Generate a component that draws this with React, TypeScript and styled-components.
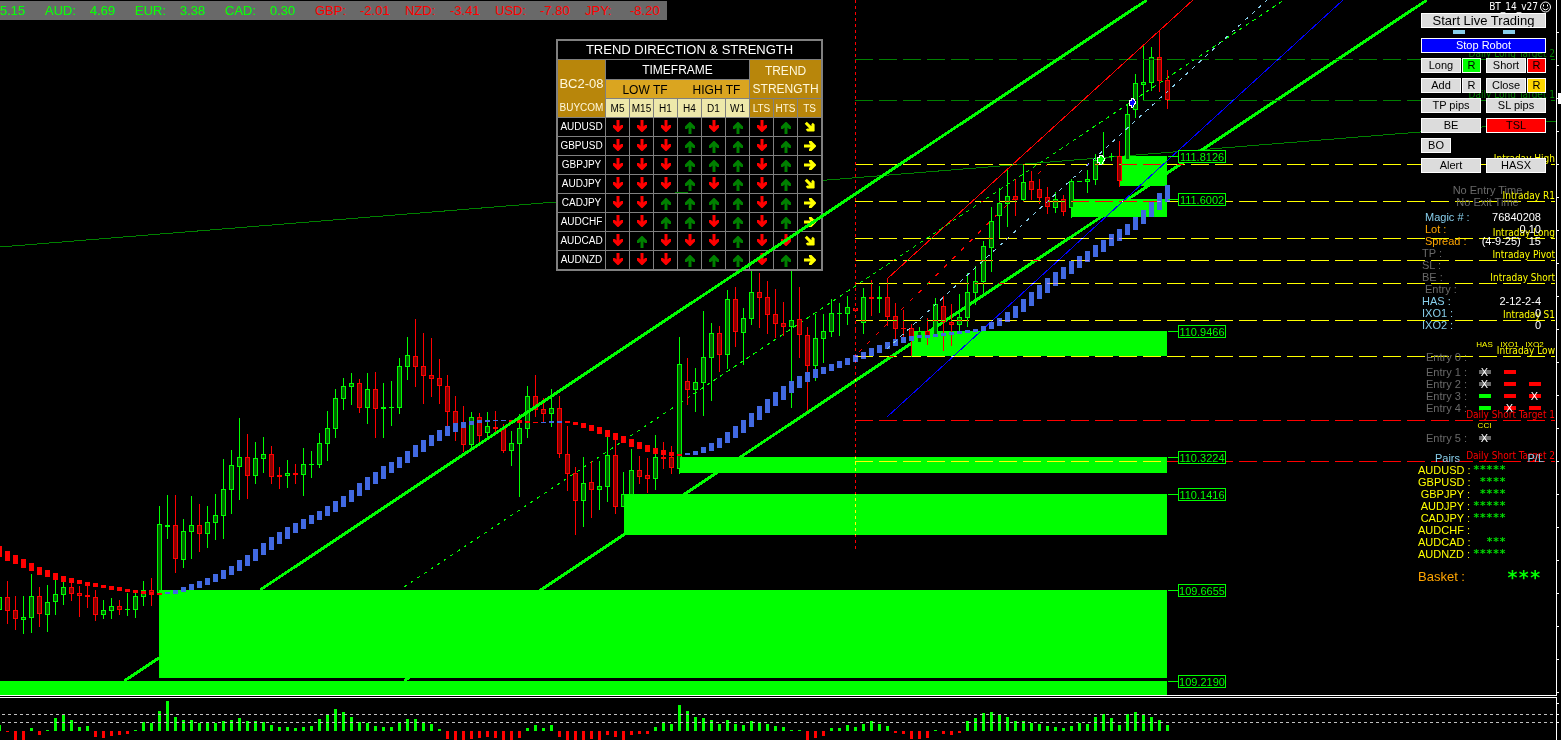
import React from 'react';
import styled, { createGlobalStyle } from 'styled-components';

const LIME = '#00ff00';
const RED = '#ff0000';
const GREY = '#696969';
const SKY = '#87ceeb';
const ORANGE = '#ffa500';
const YELLOW = '#ffff00';
const SANS = '"Liberation Sans", Arial, sans-serif';
const TAHOMA = '"DejaVu Sans Condensed", "DejaVu Sans", Tahoma, sans-serif';

const VIEW_W = 1561;
const MAIN_H = 695;
const SUB_H = 42;
const STEP = 8;

const barX = (i: number) => i * STEP - 1;

/* high, body top, body bottom, low, direction (1 = up, 0 = down) */
type Candle = [number, number, number, number, 0 | 1];
const candles: Candle[] = [
  [597, 597, 610, 610, 1], [581, 597, 611, 624, 0], [596, 610, 619, 630, 0], [596, 617, 620, 634, 1],
  [574, 596, 618, 633, 1], [587, 596, 614, 627, 0], [585, 602, 615, 632, 1], [578, 594, 602, 615, 1],
  [580, 587, 595, 605, 1], [580, 587, 594, 601, 0], [586, 593, 596, 617, 0], [584, 595, 597, 608, 0],
  [590, 597, 615, 621, 0], [600, 610, 615, 619, 1], [598, 606, 611, 619, 1], [600, 606, 610, 615, 0],
  [593, 609, 610, 616, 1], [592, 596, 610, 618, 1], [581, 590, 597, 606, 1], [578, 590, 595, 606, 0],
  [506, 524, 593, 593, 1], [495, 525, 527, 539, 1], [495, 525, 559, 573, 0], [519, 531, 560, 568, 1],
  [496, 525, 532, 559, 1], [504, 525, 534, 552, 0], [506, 522, 534, 548, 1], [494, 515, 523, 540, 1],
  [459, 489, 516, 539, 1], [450, 465, 490, 514, 1], [418, 457, 467, 500, 1], [434, 457, 476, 499, 0],
  [442, 458, 476, 484, 1], [437, 454, 459, 473, 1], [446, 454, 477, 484, 0], [467, 475, 477, 489, 0],
  [460, 473, 476, 488, 1], [464, 473, 475, 484, 0], [448, 464, 475, 496, 1], [451, 464, 465, 478, 1],
  [433, 443, 465, 468, 1], [411, 428, 444, 461, 1], [389, 398, 429, 438, 1], [378, 386, 399, 410, 1],
  [373, 383, 387, 405, 1], [379, 383, 408, 413, 0], [373, 389, 408, 424, 1], [372, 389, 409, 438, 0],
  [383, 407, 409, 438, 1], [381, 407, 408, 426, 1], [358, 366, 408, 414, 1], [337, 355, 367, 380, 1],
  [319, 356, 367, 387, 0], [333, 366, 376, 404, 0], [338, 375, 379, 397, 0], [359, 378, 386, 404, 0],
  [375, 386, 412, 427, 0], [396, 411, 432, 441, 0], [406, 423, 445, 452, 0], [412, 417, 445, 451, 1],
  [413, 417, 436, 444, 0], [412, 426, 433, 440, 1], [411, 427, 429, 432, 0], [424, 428, 451, 453, 0],
  [431, 443, 451, 466, 1], [414, 428, 444, 497, 1], [386, 396, 429, 438, 1], [375, 396, 410, 417, 0],
  [398, 409, 414, 423, 0], [389, 408, 414, 427, 1], [396, 408, 454, 458, 0], [426, 454, 474, 491, 0],
  [467, 473, 501, 535, 0], [457, 483, 501, 527, 1], [461, 482, 490, 518, 0], [461, 486, 490, 510, 1],
  [437, 455, 487, 502, 1], [437, 455, 507, 514, 0], [472, 494, 507, 507, 1], [449, 470, 496, 496, 1],
  [456, 470, 477, 484, 0], [458, 475, 479, 493, 0], [435, 457, 479, 490, 1], [442, 457, 459, 469, 0],
  [446, 457, 468, 474, 0], [337, 364, 469, 474, 1], [358, 381, 390, 405, 0], [368, 382, 390, 412, 1],
  [311, 357, 383, 416, 1], [323, 333, 358, 401, 1], [326, 333, 355, 372, 0], [290, 299, 355, 369, 1],
  [287, 299, 332, 347, 0], [308, 318, 333, 365, 1], [268, 292, 319, 325, 1], [273, 292, 298, 328, 0],
  [281, 297, 315, 334, 0], [289, 314, 324, 338, 0], [302, 323, 327, 336, 0], [268, 320, 327, 408, 1],
  [287, 319, 335, 358, 0], [327, 335, 366, 411, 0], [314, 338, 366, 381, 1], [314, 331, 339, 363, 1],
  [299, 313, 332, 337, 1], [303, 313, 314, 336, 1], [296, 307, 314, 325, 1], [295, 308, 311, 330, 0],
  [288, 297, 323, 334, 1], [280, 297, 299, 316, 0], [286, 297, 299, 313, 1], [279, 297, 317, 326, 0],
  [303, 316, 329, 341, 0], [310, 328, 329, 341, 0], [324, 328, 340, 357, 0], [327, 331, 343, 343, 1],
  [318, 331, 336, 345, 0], [298, 304, 335, 335, 1], [296, 306, 322, 351, 0], [304, 322, 325, 346, 0],
  [294, 317, 325, 331, 1], [273, 292, 318, 327, 1], [266, 281, 293, 305, 1], [241, 246, 282, 295, 1],
  [207, 221, 248, 272, 1], [188, 203, 216, 238, 1], [170, 196, 204, 227, 1], [179, 196, 200, 216, 0],
  [165, 182, 200, 202, 1], [171, 181, 190, 200, 0], [179, 189, 198, 204, 0], [187, 197, 207, 214, 0],
  [192, 199, 208, 213, 1], [195, 199, 212, 216, 0], [179, 181, 208, 218, 1], [181, 181, 182, 182, 1],
  [170, 179, 182, 193, 1], [154, 160, 180, 185, 1], [132, 158, 159, 164, 1], [153, 156, 157, 161, 1],
  [141, 156, 181, 187, 0], [104, 114, 160, 160, 1], [74, 83, 110, 118, 1], [46, 82, 85, 100, 1],
  [47, 57, 83, 91, 1], [30, 57, 81, 92, 0], [70, 80, 100, 109, 0],
];

/* smoothed average: top and bottom of each block */
const average: [number, number][] = [
  [546, 557], [551, 561], [555, 564], [559, 568], [563, 571], [567, 575], [570, 577], [573, 580], [576, 582],
  [578, 583], [580, 584], [582, 586], [583, 587], [585, 588], [586, 590], [587, 591], [589, 592], [590, 593],
  [591, 594], [592, 595], [593, 595], [592, 594], [590, 594], [587, 592], [584, 590], [581, 588], [578, 585],
  [574, 582], [570, 579], [566, 575], [560, 571], [555, 566], [549, 561], [543, 555], [537, 550], [532, 544],
  [527, 539], [523, 533], [519, 529], [515, 524], [511, 520], [506, 516], [501, 512], [496, 507], [490, 502],
  [483, 496], [477, 490], [472, 484], [466, 479], [462, 473], [457, 468], [451, 463], [445, 457], [440, 452],
  [435, 446], [430, 441], [426, 436], [423, 432], [422, 428], [421, 425], [420, 423], [420, 422], [420, 421],
  [420, 421], [420, 422], [420, 423], [421, 423], [422, 423], [422, 423], [421, 423], [421, 423], [421, 423],
  [422, 425], [423, 428], [425, 431], [427, 434], [430, 437], [433, 440], [436, 443], [439, 447], [442, 449],
  [445, 452], [448, 454], [450, 455], [452, 456], [454, 456], [453, 455], [451, 455], [447, 453], [443, 451],
  [438, 448], [432, 443], [426, 438], [420, 433], [413, 427], [406, 420], [399, 413], [392, 406], [386, 400],
  [381, 393], [376, 388], [372, 382], [369, 378], [367, 374], [364, 371], [361, 368], [358, 365], [355, 362],
  [352, 359], [348, 356], [345, 353], [342, 349], [339, 346], [337, 343], [336, 341], [335, 338], [335, 338],
  [334, 337], [333, 336], [332, 335], [331, 334], [330, 333], [329, 332], [326, 331], [322, 329], [318, 326],
  [312, 322], [306, 318], [299, 312], [292, 306], [285, 299], [278, 293], [272, 286], [267, 279], [261, 274],
  [256, 268], [251, 262], [245, 257], [240, 252], [234, 246], [229, 241], [224, 235], [217, 230], [210, 224],
  [202, 217], [193, 210], [185, 202],
];
const isFalling = (i: number) => i <= 20 || (i >= 64 && i <= 67) || (i >= 71 && i <= 85);

const histogram = [
  6, -1, -9, -9, 3, -4, 1, 13, 17, 11, 4, 5, -6, -7, -5, -4, -3, 1, 9, 8, 20, 30, 14, 11, 11, 8, 8, 8, 10, 11, 13,
  10, 10, 9, 6, 4, 4, 3, 4, 5, 12, 16, 22, 19, 14, 9, 8, 5, 4, 4, 9, 12, 12, 9, 7, 2, -8, -9, -9, -8, -7, -6, -7,
  -9, -9, -7, 3, 6, 3, 6, -6, -9, -9, -9, -8, -9, -4, -6, -9, -4, -3, -3, 4, 8, 7, 26, 20, 14, 13, 11, 7, 11, 7, 6,
  10, 8, 7, 5, 4, 1, 1, -9, -7, -5, 3, 3, 6, 4, 7, 10, 7, 5, -2, -3, -8, -8, -7, 1, -3, -4, -2, 10, 13, 18, 19, 17,
  14, 10, 10, 8, 7, 5, 4, 3, 5, 8, 7, 14, 17, 13, 6, 17, 19, 16, 14, 11, 6,
];

type Zone = { x: number; y: number; h: number };
const lowerZones: Zone[] = [
  { x: 0, y: 681, h: 14 },
  { x: 159, y: 590, h: 88 },
  { x: 624, y: 494, h: 41 },
  { x: 680, y: 457, h: 16 },
];
const upperZones: Zone[] = [
  { x: 912, y: 331, h: 25 },
  { x: 1071, y: 199, h: 18 },
  { x: 1120, y: 156, h: 30 },
];
const ZONE_END = 1167;

const prices: [string, number][] = [
  ['111.8126', 156], ['111.6002', 199], ['110.9466', 331], ['110.3224', 457],
  ['110.1416', 494], ['109.6655', 590], ['109.2190', 681],
];

const levels: [string, number, string][] = [
  ['Daily Long Target 2', 59, '#008000'],
  ['Daily Long Target 1', 100, '#008000'],
  ['Intraday High', 164, YELLOW],
  ['Intraday R1', 201, YELLOW],
  ['Intraday Long', 238, YELLOW],
  ['Intraday Pivot', 260, YELLOW],
  ['Intraday Short', 283, YELLOW],
  ['Intraday S1', 320, YELLOW],
  ['Intraday Low', 356, YELLOW],
  ['Daily Short Target 1', 420, RED],
  ['Daily Short Target 2', 461, RED],
];

const Global = createGlobalStyle`
  html, body { margin: 0; background: #000; }
  body { font-family: ${SANS}; font-size: 11px; color: #fff; }
`;

const Page = styled.main`
  position: relative;
  display: flex;
  flex-direction: column;
  min-height: 100vh;
  overflow: hidden;
  background: #000;
`;

const Plot = styled.svg`
  display: block;
  width: 100%;
  height: auto;
  shape-rendering: crispEdges;
`;

const Overlay = styled(Plot)`
  position: absolute;
  top: 0;
  left: 0;
  pointer-events: none;
`;

const LevelLines = styled.g`
  mix-blend-mode: difference;
`;

const Divider = styled.div`
  height: 1px;
  margin-right: 4px;
  border-top: 1px solid #fff;
  border-bottom: 1px solid #fff;
`;

const Zones = ({ zones }: { zones: Zone[] }) => (
  <g fill={LIME}>
    {zones.map((z) => (
      <rect key={z.y} x={z.x} y={z.y} width={ZONE_END - z.x} height={z.h} />
    ))}
  </g>
);

const CandleShape = ({ index, data }: { index: number; data: Candle }) => {
  const [high, top, bottom, low, up] = data;
  const x = barX(index);
  const edge = up ? LIME : RED;
  return (
    <g>
      <rect x={x} y={high} width={1} height={low - high} fill={edge} />
      <rect x={x - 2} y={top} width={5} height={bottom - top} fill={edge} />
      {bottom - top > 2 && (
        <rect x={x - 1} y={top + 1} width={3} height={bottom - top - 2} fill={up ? '#006400' : '#8b0000'} />
      )}
    </g>
  );
};

const axisTicks = Array.from({ length: 21 }, (_, k) => 32 + 33 * k);

const PriceChart = () => (
  <Plot viewBox={`0 0 ${VIEW_W} ${MAIN_H}`} role="img" aria-label="Price chart">
    <line x1={0} y1={247} x2={1556} y2={121} stroke="#008000" />
    <Zones zones={upperZones} />
    <line x1={404} y1={681} x2={1427} y2={0} stroke={LIME} strokeWidth={3} />
    <line x1={887} y1={279} x2={1193} y2={0} stroke={RED} />
    <line x1={887} y1={417} x2={1343} y2={0} stroke="#0000ff" />
    <line x1={859} y1={352} x2={1047} y2={165} stroke={RED} strokeDasharray="4 8" />
    <line x1={404} y1={587} x2={680} y2={403} stroke={LIME} strokeDasharray="3 5" />
    <line x1={680} y1={403} x2={1284} y2={0} stroke={LIME} strokeDasharray="4 4" />
    {candles.map((c, i) => (
      <CandleShape key={i} index={i} data={c} />
    ))}
    <Zones zones={lowerZones} />
    {average.map(([top, bottom], i) => (
      <rect
        key={i}
        x={barX(i) - 2}
        y={top}
        width={5}
        height={bottom - top}
        fill={isFalling(i) ? RED : '#4169e1'}
      />
    ))}
    <line x1={887} y1={349} x2={1267} y2={0} stroke={SKY} strokeDasharray="4 5" />
    <LevelLines>
      {levels.map(([name, y, color]) => (
        <g key={name}>
          {Array.from({ length: 30 }, (_, k) => 855 + 24 * k).map((x) => (
            <rect key={x} x={x} y={y} width={Math.min(18, 1555 - x)} height={1} fill={color} />
          ))}
        </g>
      ))}
      {Array.from({ length: 92 }, (_, k) => 6 * k).map((y) => (
        <rect key={y} x={855} y={y} width={1} height={3} fill={RED} />
      ))}
    </LevelLines>
    {levels.map(([name, y, color]) => (
      <text key={name} x={1555} y={y - 2} fill={color} fontFamily={TAHOMA} fontSize={10} textAnchor="end">
        {name}
      </text>
    ))}
    {prices.map(([price, y]) => (
      <g key={price}>
        <rect x={1168} y={y} width={10} height={1} fill={LIME} />
        <rect x={1178} y={y - 6} width={48} height={13} fill={LIME} />
        <rect x={1179} y={y - 5} width={46} height={11} fill="#000" />
        <text x={1202} y={y + 5} fill={LIME} fontFamily={SANS} fontSize={11} textAnchor="middle">
          {price}
        </text>
      </g>
    ))}
    <path d="M1097 157h2v-2h3l3 4l-3 5h-3v-2h-2z" fill={LIME} stroke="#fff" />
    <path d="M1129 100h2v-2h2l3 4l-3 5h-2v-2h-2z" fill="#0000ff" stroke="#fff" />
    <rect x={1556} y={0} width={1} height={MAIN_H} fill="#fff" />
    {axisTicks.map((y) => (
      <rect key={y} x={1557} y={y} width={2} height={1} fill="#fff" />
    ))}
    <rect x={1558} y={93} width={3} height={11} fill="#fff" />
  </Plot>
);

const BASELINE = 33;
const Histogram = () => (
  <Plot viewBox={`0 0 ${VIEW_W} ${SUB_H}`} role="img" aria-label="Momentum histogram">
    {histogram.map((v, i) => (
      <rect
        key={i}
        x={barX(i) - 1}
        y={v > 0 ? BASELINE - v : BASELINE}
        width={3}
        height={Math.abs(v)}
        fill={v > 0 ? LIME : RED}
      />
    ))}
    {[16, 24].map((y) => (
      <g key={y} fill="#c0c0c0">
        {Array.from({ length: 259 }, (_, k) => 2 + 6 * k).map((x) => (
          <rect key={x} x={x} y={y} width={3} height={1} />
        ))}
      </g>
    ))}
    <rect x={1556} y={0} width={1} height={SUB_H} fill="#fff" />
    {[5, 16, 24].map((y) => (
      <rect key={y} x={1557} y={y} width={2} height={1} fill="#fff" />
    ))}
  </Plot>
);

/* ---------- currency ticker ---------- */

const Ticker = styled.ul`
  position: absolute;
  top: 1px;
  left: 0;
  display: flex;
  margin: 0;
  padding: 0 7px 0 0;
  list-style: none;
  background: ${GREY};
  font-size: 13px;
  line-height: 19px;
`;

const Quote = styled.li<{ $down?: boolean; $labelled?: boolean }>`
  display: grid;
  grid-template-columns: ${(p) => (p.$labelled ? '45px 45px' : '45px')};
  color: ${(p) => (p.$down ? RED : LIME)};

  &:last-child {
    grid-template-columns: 45px auto;
  }
`;

const quotes: [string, string][] = [
  ['AUD:', '4.69'], ['EUR:', '3.38'], ['CAD:', '0.30'], ['GBP:', '-2.01'],
  ['NZD:', '-3.41'], ['USD:', '-7.80'], ['JPY:', '-8.20'],
];

/* ---------- trend table ---------- */

const TrendTable = styled.table`
  position: absolute;
  top: 39px;
  left: 556px;
  width: 267px;
  box-sizing: border-box;
  table-layout: fixed;
  border-collapse: separate;
  border-spacing: 0;
  border: 2px solid #808080;
  background: #000;
  color: #fff;
`;

type CellProps = { $bg?: string; $fg?: string; $size?: number; $noRight?: boolean; $noBottom?: boolean; $h?: number };
const HeadCell = styled.th<CellProps>`
  box-sizing: border-box;
  height: ${(p) => p.$h ?? 19}px;
  padding: 0;
  overflow: hidden;
  border-right: ${(p) => (p.$noRight ? 0 : 1)}px solid #808080;
  border-bottom: ${(p) => (p.$noBottom ? 0 : 1)}px solid #808080;
  background: ${(p) => p.$bg ?? '#000'};
  color: ${(p) => p.$fg ?? '#fff'};
  font-size: ${(p) => p.$size ?? 10}px;
  font-weight: 400;
  line-height: 18px;
  text-align: center;
  white-space: nowrap;
`;

const NameCell = styled(HeadCell)`
  line-height: 16px;
`;

const FrameCell = styled(HeadCell)`
  padding-top: 2px;
  line-height: 16px;
`;

const GroupCell = styled(HeadCell)`
  padding: 2px 0 0 6px;
  line-height: 16px;
`;

const CornerCell = styled(HeadCell)`
  vertical-align: bottom;
`;

const CornerName = styled.div`
  padding-bottom: 6px;
  font-size: 13px;
`;

const StrengthCell = styled(HeadCell)`
  padding-top: 2px;
  line-height: 18px;
`;

const ArrowCell = styled.td<{ $noRight?: boolean; $noBottom?: boolean; $drop: number }>`
  box-sizing: border-box;
  height: ${(p) => (p.$noBottom ? 18 : 19)}px;
  padding: ${(p) => p.$drop}px 0 0;
  border-right: ${(p) => (p.$noRight ? 0 : 1)}px solid #808080;
  border-bottom: ${(p) => (p.$noBottom ? 0 : 1)}px solid #808080;
  vertical-align: top;
  line-height: 0;
  text-align: center;
`;

/* colour, rotation, spoken name, distance from the cell's top */
const arrows: Record<string, [string, number, string, number]> = {
  D: [RED, 0, 'Down', 2],
  U: ['#008000', 180, 'Up', 4],
  R: [YELLOW, -90, 'Flat', 3],
  S: [YELLOW, -45, 'Weakening', 3],
};

const Arrow = ({ kind }: { kind: string }) => {
  const [color, turn, name] = arrows[kind];
  return (
    <svg width={12} height={12} viewBox="-6 -6 12 12" role="img" aria-label={name}>
      <path
        d="M-1.5 -6H1.5V0.5L3 -1H5V1.5L0.5 6H-0.5L-5 1.5V-1H-3L-1.5 0.5Z"
        fill={color}
        transform={`rotate(${turn})`}
      />
    </svg>
  );
};

const trendRows: [string, string][] = [
  ['AUDUSD', 'DDDUDUDUS'],
  ['GBPUSD', 'DDDUUUDUR'],
  ['GBPJPY', 'DDDUUUDUR'],
  ['AUDJPY', 'DDDUDUDUS'],
  ['CADJPY', 'DDUUUUDUR'],
  ['AUDCHF', 'DDUUDUDUR'],
  ['AUDCAD', 'DUDDDUDDS'],
  ['AUDNZD', 'DDDUUUDUR'],
];

const DARK_GOLD = '#b8860b';
const GOLD = '#daa520';
const PALE = '#eee8aa';
const CREAM = '#fff8dc';

const Trend = () => (
  <TrendTable>
    <colgroup>
      <col style={{ width: 48 }} />
      {Array.from({ length: 8 }, (_, k) => (
        <col key={k} style={{ width: 24 }} />
      ))}
      <col style={{ width: 23 }} />
    </colgroup>
    <thead>
      <tr>
        <HeadCell colSpan={10} $size={13} $noRight>TREND DIRECTION &amp; STRENGTH</HeadCell>
      </tr>
      <tr>
        <CornerCell rowSpan={3} $bg={DARK_GOLD} $fg={CREAM}>
          <CornerName>BC2-08</CornerName>
          BUYCOM
        </CornerCell>
        <HeadCell colSpan={6} $size={12} $h={20}>TIMEFRAME</HeadCell>
        <StrengthCell colSpan={3} rowSpan={2} $size={12} $bg={DARK_GOLD} $fg={CREAM} $noRight>
          TREND<br />STRENGTH
        </StrengthCell>
      </tr>
      <tr>
        <GroupCell colSpan={3} $size={12} $bg={GOLD} $fg="#000" $noRight>LOW TF</GroupCell>
        <GroupCell colSpan={3} $size={12} $bg={GOLD} $fg="#000">HIGH TF</GroupCell>
      </tr>
      <tr>
        {['M5', 'M15', 'H1', 'H4', 'D1', 'W1'].map((t) => (
          <FrameCell key={t} $bg={PALE} $fg="#000">{t}</FrameCell>
        ))}
        {['LTS', 'HTS', 'TS'].map((t) => (
          <FrameCell key={t} $bg={DARK_GOLD} $fg={CREAM} $noRight={t === 'TS'}>{t}</FrameCell>
        ))}
      </tr>
    </thead>
    <tbody>
      {trendRows.map(([pair, dirs], r) => {
        const last = r === trendRows.length - 1;
        return (
          <tr key={pair}>
            <NameCell scope="row" $noBottom={last} $h={last ? 18 : 19}>{pair}</NameCell>
            {dirs.split('').map((d, i) => (
              <ArrowCell key={i} $drop={arrows[d][3]} $noRight={i === 8} $noBottom={last}>
                <Arrow kind={d} />
              </ArrowCell>
            ))}
          </tr>
        );
      })}
    </tbody>
  </TrendTable>
);

/* ---------- robot control panel ---------- */

const Panel = styled.aside`
  position: absolute;
  top: 0;
  right: 15px;
  width: 125px;
  line-height: 12px;
`;

const PanelHead = styled.header`
  display: flex;
  align-items: center;
  justify-content: flex-end;
  height: 13px;
  margin-right: -6px;
  gap: 1px;
  font-family: ${TAHOMA};
  font-size: 10px;
`;

const PanelButton = styled.button<{ $bg?: string; $fg?: string; $w?: number; $size?: number }>`
  box-sizing: border-box;
  width: ${(p) => (p.$w ? `${p.$w}px` : '100%')};
  height: 15px;
  padding: 0;
  overflow: hidden;
  border: 1px solid #fff;
  background: ${(p) => p.$bg ?? '#dcdcdc'};
  color: ${(p) => p.$fg ?? '#000'};
  font-family: ${SANS};
  font-size: ${(p) => p.$size ?? 11}px;
  line-height: 13px;
  white-space: nowrap;
`;

const Lamps = styled.div`
  display: flex;
  justify-content: center;
  gap: 38px;
  height: 10px;
  padding-top: 2px;
  box-sizing: border-box;
`;

const Block = styled.span<{ $color: string }>`
  width: 12px;
  height: 4px;
  background: ${(p) => p.$color};
`;

const ButtonRow = styled.div`
  display: flex;
  gap: 5px;
  margin-top: 5px;
`;

const Pair = styled.div`
  display: flex;
  gap: 1px;
`;

const Notice = styled.p`
  margin: 11px 0 3px;
  padding-left: 8px;
  color: ${GREY};
  text-align: center;
`;

const Info = styled.dl`
  margin: 0;
  padding-right: 5px;
`;

const InfoRow = styled.div<{ $color: string; $indent?: boolean }>`
  display: flex;
  justify-content: space-between;
  height: 12px;
  padding-left: ${(p) => (p.$indent ? 4 : 1)}px;
  color: ${(p) => p.$color};
`;

const Value = styled.dd`
  display: flex;
  gap: 8px;
  margin: 0;
  color: #fff;
`;

const infoRows: [string, string[], string, boolean][] = [
  ['Magic # :', ['76840208'], SKY, true],
  ['Lot :', ['0.10'], ORANGE, true],
  ['Spread :', ['(4-9-25)', '15'], ORANGE, true],
  ['TP :', [], GREY, false],
  ['SL :', [], GREY, false],
  ['BE :', [], GREY, false],
  ['Entry :', [], GREY, true],
  ['HAS :', ['2-12-2-4'], SKY, false],
  ['IXO1 :', ['0'], SKY, false],
  ['IXO2 :', ['0'], SKY, false],
];

const PanelTable = styled.table`
  width: 126px;
  table-layout: fixed;
  border-collapse: collapse;
`;

const PairTable = styled(PanelTable)`
  width: 128px;
  margin-left: -3px;
`;

const SignalHead = styled.th<{ $gap?: number }>`
  height: 12px;
  padding: ${(p) => p.$gap ?? 0}px 0 0;
  color: ${YELLOW};
  font-size: 8px;
  font-weight: 400;
  text-align: center;
`;

const EntryLabel = styled.th<{ $gap?: number }>`
  height: 12px;
  padding: ${(p) => p.$gap ?? 0}px 0 0 5px;
  color: ${GREY};
  font-weight: 400;
  text-align: left;
  white-space: nowrap;
`;

const SignalCell = styled.td<{ $gap?: number }>`
  height: 12px;
  padding: ${(p) => p.$gap ?? 0}px 0 0;
`;

const Signal = styled.div`
  display: grid;
  place-items: center;
  height: 12px;

  > * {
    grid-area: 1 / 1;
  }
`;

const Cross = styled.span`
  line-height: 12px;
`;

/* g = grey, r = red, l = lime; upper case adds the cross */
const signalColors: Record<string, string> = { g: GREY, r: RED, l: LIME };
const entries: [string, string, number][] = [
  ['Entry 0 :', '   ', 0],
  ['Entry 1 :', 'Gr ', 3],
  ['Entry 2 :', 'Grr', 0],
  ['Entry 3 :', 'lrR', 0],
  ['Entry 4 :', 'lRr', 0],
];

const EntryRow = ({ label, signals, gap }: { label: string; signals: string; gap: number }) => (
  <tr>
    <EntryLabel scope="row" $gap={gap}>{label}</EntryLabel>
    {signals.split('').map((s, i) => (
      <SignalCell key={i} $gap={gap}>
        {s !== ' ' && (
          <Signal>
            <Block $color={signalColors[s.toLowerCase()]} />
            {s !== s.toLowerCase() && <Cross>X</Cross>}
          </Signal>
        )}
      </SignalCell>
    ))}
  </tr>
);

const PairHead = styled.th<{ $right?: boolean }>`
  height: 12px;
  padding: 8px ${(p) => (p.$right ? 2 : 10)}px 0 0;
  color: ${SKY};
  font-weight: 400;
  text-align: right;
`;

const PairName = styled.th`
  height: 12px;
  padding: 0;
  color: ${YELLOW};
  font-weight: 400;
  text-align: right;
  white-space: nowrap;
`;

const Stars = styled.td`
  height: 12px;
  padding: 0 40px 0 0;
  color: #00dc00;
  font-family: "DejaVu Sans Mono", monospace;
  font-size: 11px;
  font-weight: 700;
  line-height: 12px;
  text-align: right;
`;

const pairs: [string, number][] = [
  ['AUDUSD', 5], ['GBPUSD', 4], ['GBPJPY', 4], ['AUDJPY', 5],
  ['CADJPY', 5], ['AUDCHF', 0], ['AUDCAD', 3], ['AUDNZD', 5],
];

const Basket = styled.div`
  display: flex;
  align-items: center;
  justify-content: space-between;
  height: 16px;
  margin: 9px 5px 0 -3px;
  color: ${ORANGE};
  font-size: 13px;
`;

const BasketStars = styled.span`
  color: ${LIME};
  font-family: "DejaVu Sans Mono", monospace;
  font-size: 19px;
  font-weight: 700;
`;

const Robot = () => (
  <Panel>
    <PanelHead>
      BT_14_v27
      <svg width={13} height={13} viewBox="0 0 13 13" fill="none" stroke="#fff" aria-hidden="true">
        <circle cx={6.5} cy={7} r={5} />
        <path d="M3.5 8Q6.5 11.5 9.5 8" />
        <path d="M4.5 4.5v2M8.5 4.5v2" />
      </svg>
    </PanelHead>
    <PanelButton $size={13}>Start Live Trading</PanelButton>
    <Lamps>
      <Block $color={SKY} />
      <Block $color={SKY} />
    </Lamps>
    <PanelButton $bg="#0000ff" $fg="#fff">Stop Robot</PanelButton>
    <ButtonRow>
      <Pair>
        <PanelButton $w={40}>Long</PanelButton>
        <PanelButton $w={19} $bg={LIME} aria-label="Reset long">R</PanelButton>
      </Pair>
      <Pair>
        <PanelButton $w={40}>Short</PanelButton>
        <PanelButton $w={19} $bg={RED} aria-label="Reset short">R</PanelButton>
      </Pair>
    </ButtonRow>
    <ButtonRow>
      <Pair>
        <PanelButton $w={40}>Add</PanelButton>
        <PanelButton $w={19} aria-label="Reset add">R</PanelButton>
      </Pair>
      <Pair>
        <PanelButton $w={40}>Close</PanelButton>
        <PanelButton $w={19} $bg="#ffd700" aria-label="Reset close">R</PanelButton>
      </Pair>
    </ButtonRow>
    <ButtonRow>
      <PanelButton>TP pips</PanelButton>
      <PanelButton>SL pips</PanelButton>
    </ButtonRow>
    <ButtonRow>
      <PanelButton>BE</PanelButton>
      <PanelButton $bg={RED}>TSL</PanelButton>
    </ButtonRow>
    <ButtonRow>
      <PanelButton $w={30}>BO</PanelButton>
    </ButtonRow>
    <ButtonRow>
      <PanelButton>Alert</PanelButton>
      <PanelButton>HASX</PanelButton>
    </ButtonRow>
    <Notice>
      No Entry Time<br />No Exit Time
    </Notice>
    <Info>
      {infoRows.map(([label, values, color, indent]) => (
        <InfoRow key={label} $color={color} $indent={indent}>
          <dt>{label}</dt>
          <Value>
            {values.map((v) => (
              <span key={v}>{v}</span>
            ))}
          </Value>
        </InfoRow>
      ))}
    </Info>
    <PanelTable>
      <colgroup>
        <col style={{ width: 51 }} />
        <col style={{ width: 25 }} />
        <col style={{ width: 25 }} />
        <col style={{ width: 25 }} />
      </colgroup>
      <tbody>
        <tr>
          <SignalHead $gap={8} />
          <SignalHead $gap={8}>HAS</SignalHead>
          <SignalHead $gap={8}>IXO1</SignalHead>
          <SignalHead $gap={8}>IXO2</SignalHead>
        </tr>
        {entries.map(([label, signals, gap]) => (
          <EntryRow key={label} label={label} signals={signals} gap={gap} />
        ))}
        <tr>
          <SignalHead $gap={6} />
          <SignalHead $gap={6}>CCI</SignalHead>
        </tr>
        <EntryRow label="Entry 5 :" signals="G" gap={0} />
      </tbody>
    </PanelTable>
    <PairTable>
      <colgroup>
        <col style={{ width: 52 }} />
        <col style={{ width: 76 }} />
      </colgroup>
      <thead>
        <tr>
          <PairHead>Pairs</PairHead>
          <PairHead $right>P/L</PairHead>
        </tr>
      </thead>
      <tbody>
        {pairs.map(([pair, count]) => (
          <tr key={pair}>
            <PairName scope="row">{pair} :</PairName>
            <Stars>{'*'.repeat(count)}</Stars>
          </tr>
        ))}
      </tbody>
    </PairTable>
    <Basket>
      <span>Basket :</span>
      <BasketStars>***</BasketStars>
    </Basket>
  </Panel>
);

export default function App() {
  return (
    <Page>
      <Global />
      <PriceChart />
      <Divider />
      <Histogram />
      <Ticker>
        <Quote><span>5.15</span></Quote>
        {quotes.map(([name, value]) => (
          <Quote key={name} $labelled $down={value.startsWith('-')}>
            <span>{name}</span>
            <span>{value}</span>
          </Quote>
        ))}
      </Ticker>
      <Trend />
      <Overlay viewBox={`0 0 ${VIEW_W} ${MAIN_H}`} aria-hidden="true">
        <g stroke={LIME} strokeWidth={3}>
          <line x1={124} y1={681} x2={159} y2={658} />
          <line x1={260} y1={590} x2={1147} y2={0} />
        </g>
        <rect x={675} y={192} width={13} height={1} fill="#008000" />
      </Overlay>
      <Robot />
    </Page>
  );
}
